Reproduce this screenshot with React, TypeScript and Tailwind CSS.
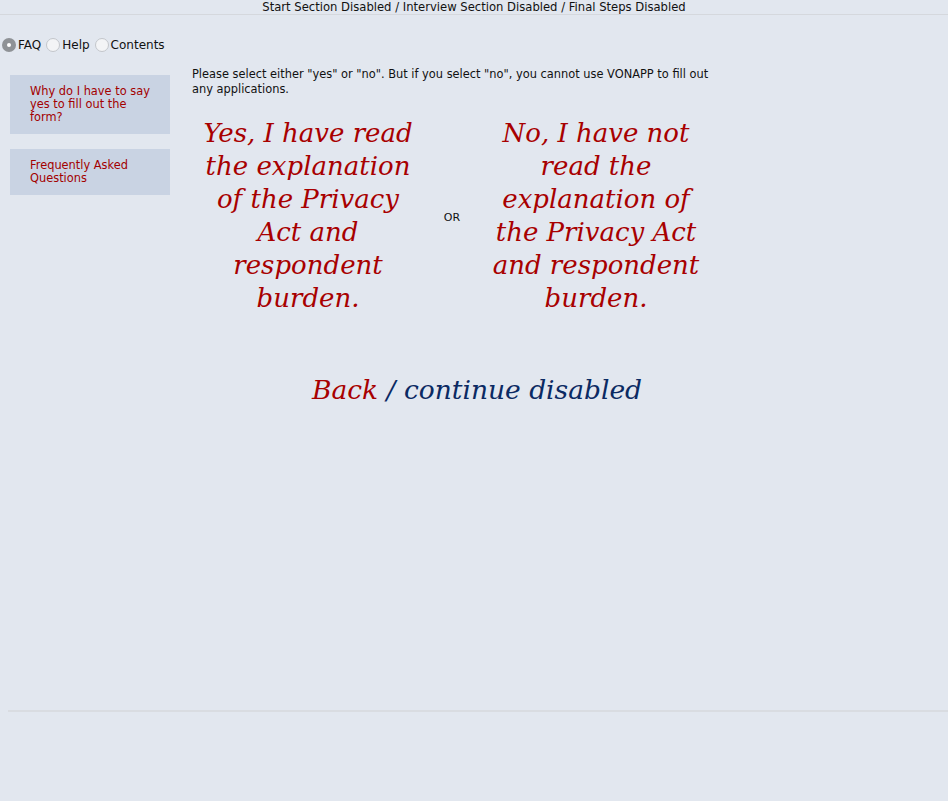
import React from "react";

const sans = "font-['DejaVu_Sans',sans-serif]";
const serif = "font-['DejaVu_Serif',serif]";

function Radio({ label, checked }: { label: string; checked?: boolean }) {
  return (
    <label className="flex items-center">
      <span
        className={
          checked
            ? "flex h-[14px] w-[14px] items-center justify-center rounded-full bg-[#8f9296]"
            : "h-[14px] w-[14px] rounded-full border border-[#c3c6cb] bg-[#f3f4f6]"
        }
      >
        {checked && <span className="h-[4px] w-[4px] rounded-full bg-white" />}
      </span>
      <span className="ml-[2px]">{label}</span>
    </label>
  );
}

export default function App() {
  return (
    <div className={`min-h-[801px] w-[948px] bg-[#e2e7ef] text-[#111] ${sans}`}>
      <header className="h-[15px] border-b border-[#d5d8dd] pt-[1px] text-center text-[11.6px] leading-[13px] text-[#111]">
        Start Section Disabled / Interview Section Disabled / Final Steps Disabled
      </header>

      <div className="ml-[8px] flex h-[697px] flex-col border-b-2 border-[#d9dce1]">
        <div className="-ml-[6px] mt-[23px] flex items-center gap-[5px] text-[12px] leading-[14px]">
          <Radio label="FAQ" checked />
          <Radio label="Help" />
          <Radio label="Contents" />
        </div>

        <div className="mt-[15px] flex">
          <aside className="ml-[2px] flex w-[160px] flex-col gap-[15px] pt-[8px] text-[11.4px] leading-[13px] text-[#a30000]">
            <div className="bg-[#c9d3e3] pb-[10px] pl-[20px] pr-[14px] pt-[10px]">
              Why do I have to say yes to fill out the form?
            </div>
            <div className="bg-[#c9d3e3] pb-[10px] pl-[20px] pr-[14px] pt-[10px]">
              Frequently Asked Questions
            </div>
          </aside>

          <main className="ml-[22px] flex w-[540px] flex-col">
            <p className="w-[530px] text-[11.4px] leading-[15px] text-[#111]">
              Please select either "yes" or "no". But if you select "no", you cannot use VONAPP to fill out any
              applications.
            </p>

            <div className={`mt-[20px] flex items-center italic text-[#a80000] ${serif}`}>
              <div className="w-[232px] text-center text-[26px] leading-[33px]">
                Yes, I have read<br />the explanation<br />of the Privacy<br />Act and<br />respondent<br />burden.
              </div>
              <div className={`w-[56px] pt-[4px] text-center not-italic text-[11px] text-[#111] ${sans}`}>OR</div>
              <div className="w-[232px] text-center text-[26px] leading-[33px]">
                No, I have not<br />read the<br />explanation of<br />the Privacy Act<br />and respondent<br />burden.
              </div>
            </div>

            <div className={`mt-[58px] w-[570px] text-center italic text-[26.5px] leading-[34px] ${serif}`}>
              <span className="text-[#a80000]">Back</span>
              <span className="text-[#0b2a63]"> / continue disabled</span>
            </div>
          </main>
        </div>
      </div>
    </div>
  );
}
